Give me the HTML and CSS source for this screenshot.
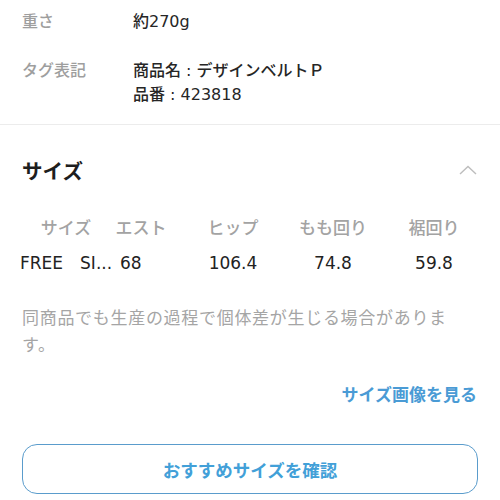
FILE: index.html
```html
<!DOCTYPE html>
<html lang="ja">
<head>
<meta charset="utf-8">
<link rel="stylesheet" href="styles.css">
</head>
<body>
<section class="spec">
  <div class="spec-row">
    <div class="spec-label">重さ</div>
    <div class="spec-value">約270g</div>
  </div>
  <div class="spec-row spec-row-2">
    <div class="spec-label">タグ表記</div>
    <div class="spec-value">商品名 : デザインベルトＰ<br>品番 : 423818</div>
  </div>
</section>
<section class="size">
  <div class="size-head">
    <h2 class="size-title">サイズ</h2>
    <svg class="chevron" width="18" height="10" viewBox="0 0 18 10"><polyline points="1,9 9,1.5 17,9" fill="none" stroke="#bdbdbd" stroke-width="1.4"/></svg>
  </div>
  <div class="size-table">
    <div class="th">サイズ</div>
    <div class="th">エスト</div>
    <div class="th">ヒップ</div>
    <div class="th">もも回り</div>
    <div class="th">裾回り</div>
    <div class="td td-first">FREE　SI...</div>
    <div class="td td-second">68</div>
    <div class="td">106.4</div>
    <div class="td">74.8</div>
    <div class="td">59.8</div>
  </div>
  <p class="note">同商品でも生産の過程で個体差が生じる場合があります。</p>
  <div class="link-row"><a class="size-link">サイズ画像を見る</a></div>
  <button class="recommend">おすすめサイズを確認</button>
</section>
</body>
</html>
```

FILE: styles.css
```css
body {
  margin: 0;
  background: #fff;
  font-family: "DejaVu Sans", "Noto Sans CJK JP", sans-serif;
  color: #222;
}
.spec {
  padding: 10px 22px 17px;
  border-bottom: 1px solid #ececec;
}
.spec-row {
  display: grid;
  grid-template-columns: 111px 1fr;
  font-size: 16px;
  line-height: 24px;
}
.spec-row-2 {
  margin-top: 25px;
}
.spec-label {
  color: #9e9e9e;
  font-weight: 500;
}
.spec-value {
  color: #262626;
  font-weight: 500;
}
.size {
  padding: 0 22px;
}
.size-head {
  display: flex;
  justify-content: space-between;
  align-items: center;
  margin-top: 33px;
  height: 28px;
}
.size-title {
  margin: 0;
  font-size: 20.5px;
  line-height: 28px;
  font-weight: 700;
  color: #1e1e1e;
}
.chevron {
  margin-right: 1px;
  margin-top: -4px;
}
.size-table {
  display: grid;
  grid-template-columns: 92px 58px 126px 74px 128px;
  margin: 30px 0 0 -2px;
  row-gap: 11px;
  font-size: 17px;
  line-height: 24px;
}
.th {
  text-align: center;
  color: #a3a3a3;
  font-weight: 500;
}
.td {
  text-align: center;
  color: #222;
  font-weight: 500;
}
.td-first {
  text-align: left;
  white-space: nowrap;
}
.td-second {
  text-align: left;
  padding-left: 8px;
}
.note {
  margin: 30px 0 0;
  font-size: 17px;
  line-height: 27px;
  letter-spacing: 0.7px;
  color: #a5a5a5;
}
.link-row {
  margin-top: 24px;
  text-align: right;
  line-height: 24px;
}
.size-link {
  font-size: 17px;
  font-weight: 700;
  color: #4a9bd5;
  margin-right: 1px;
}
.recommend {
  display: block;
  width: 100%;
  height: 50px;
  margin-top: 36px;
  border: 1px solid #5a9ccc;
  border-radius: 15px;
  background: #fff;
  font-family: inherit;
  font-size: 17.5px;
  font-weight: 700;
  color: #42a0d8;
}
```
